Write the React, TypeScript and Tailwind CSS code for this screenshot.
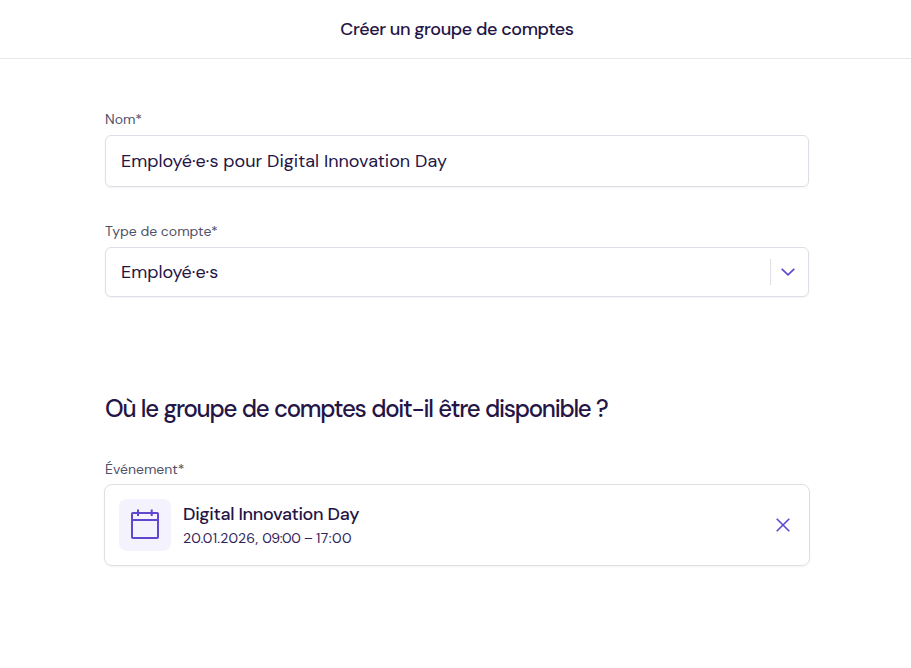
import React from 'react';

interface FieldProps {
  label: string;
  className?: string;
  children: React.ReactNode;
}

function Field({ label, className = '', children }: FieldProps) {
  return (
    <div className={`flex flex-col ${className}`}>
      <span className="mb-1.5 text-[14px] leading-5 text-[#4f5169]">{label}</span>
      {children}
    </div>
  );
}

function CalendarIcon() {
  return (
    <svg width="32" height="32" viewBox="0 0 32 32" fill="none" stroke="#6147cf" strokeWidth="2">
      <rect x="3" y="4" width="26" height="25" rx="0.8" />
      <path d="M3 11h26M9 0.5v6.5M22.7 0.5v6.5" />
    </svg>
  );
}

export default function App() {
  return (
    <div className="min-h-[668px] bg-white font-['DM_Sans','Inter',sans-serif] text-[#241546]">
      <header className="flex h-[59px] items-center justify-center border-b border-[#e8e8ea] pl-[3px]">
        <h1 className="text-[18px] font-medium tracking-[-0.42px]">Créer un groupe de comptes</h1>
      </header>

      <main className="ml-[105px] w-[704px] pt-[50px]">
        <Field label="Nom*">
          <div className="flex h-[52px] items-center rounded-md border border-[#dfdee6] px-[15px] text-[18px] tracking-[0.02px] shadow-xs">
            <span>Employé·e·s pour Digital Innovation Day</span>
          </div>
        </Field>

        <Field label="Type de compte*" className="mt-[34px]">
          <div className="flex h-[50px] items-center justify-between rounded-md border border-[#dfdee6] pl-[15px] text-[18px] shadow-xs">
            <span>Employé·e·s</span>
            <div className="flex h-[26px] w-[38px] items-center justify-center border-l border-[#dfdee6] pr-[3px]">
              <svg width="14" height="8" viewBox="0 0 14 8" fill="none" stroke="#6147cf" strokeWidth="1.7">
                <path d="M0.7 0.8L7 6.8L13.3 0.8" />
              </svg>
            </div>
          </div>
        </Field>

        <h2 className="mt-[96px] text-[24px] leading-8 font-medium tracking-[-1.25px] whitespace-nowrap [word-spacing:0.7px]">
          Où le groupe de comptes doit-il être disponible ?
        </h2>

        <Field label="Événement*" className="mt-[34px]">
          <div className="-mx-px -mt-px flex h-[82px] items-center rounded-lg border border-[#dfdee3] px-[14px] shadow-xs">
            <div className="flex size-[52px] items-center justify-center rounded-lg bg-[#f3f2fd]">
              <CalendarIcon />
            </div>
            <div className="ml-3 flex flex-1 flex-col pt-[2px]">
              <span className="text-[18px] leading-6 font-medium tracking-[-0.32px]">Digital Innovation Day</span>
              <span className="text-[14px] leading-6 text-[#31235a]">
                <span className="tracking-[0.23px]">20.01.2026, </span>
                <span className="tracking-[-0.42px]">09:00 – </span>
                <span className="tracking-[0.45px]">17:00</span>
              </span>
            </div>
            <svg className="mr-[5px]" width="14" height="14" viewBox="0 0 14 14" fill="none" stroke="#6147cf" strokeWidth="1.6">
              <path d="M0.7 0.7L13.3 13.3M13.3 0.7L0.7 13.3" />
            </svg>
          </div>
        </Field>
      </main>
    </div>
  );
}
